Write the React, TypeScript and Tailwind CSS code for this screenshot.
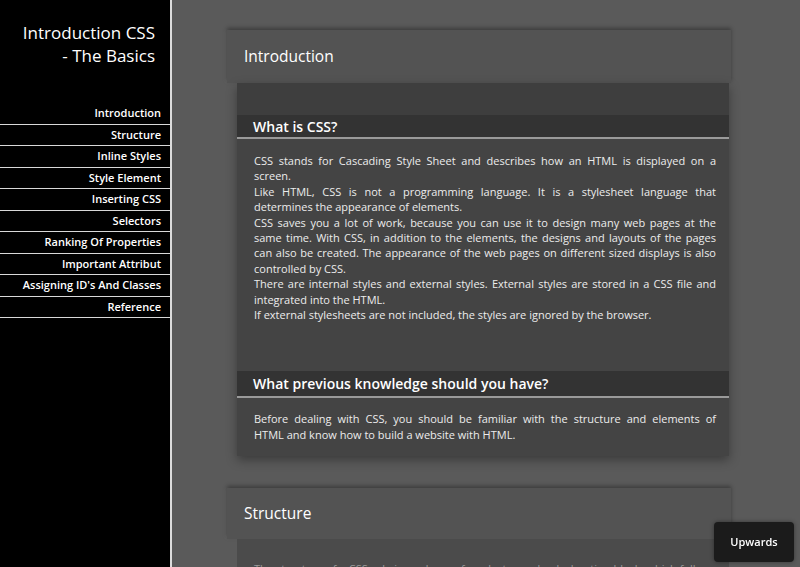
const navItems = [
  'Introduction',
  'Structure',
  'Inline Styles',
  'Style Element',
  'Inserting CSS',
  'Selectors',
  'Ranking Of Properties',
  'Important Attribut',
  "Assigning ID's And Classes",
  'Reference',
];

// [text, justified]
const whatIsCss: [string, boolean][] = [
  ['CSS stands for Cascading Style Sheet and describes how an HTML is displayed on a', true],
  ['screen.', false],
  ['Like HTML, CSS is not a programming language. It is a stylesheet language that', true],
  ['determines the appearance of elements.', false],
  ['CSS saves you a lot of work, because you can use it to design many web pages at the', true],
  ['same time. With CSS, in addition to the elements, the designs and layouts of the pages', true],
  ['can also be created. The appearance of the web pages on different sized displays is also', true],
  ['controlled by CSS.', false],
  ['There are internal styles and external styles. External styles are stored in a CSS file and', true],
  ['integrated into the HTML.', false],
  ['If external stylesheets are not included, the styles are ignored by the browser.', false],
];

const knowledge: [string, boolean][] = [
  ['Before dealing with CSS, you should be familiar with the structure and elements of', true],
  ['HTML and know how to build a website with HTML.', false],
];

const Sidebar = () => {
  return (
    <aside className="w-[172px] shrink-0 h-full bg-black border-r-2 border-[#dcdcdc]">
      <div className="h-[103px] pt-[21px] pr-[15px] text-right text-white text-[17px] leading-[23px]">
        Introduction CSS
        <br />- The Basics
      </div>
      <ul>
        {navItems.map((item) => (
          <li
            key={item}
            className="h-[21.5px] border-b border-[#d8d8d8] pr-[9px] flex items-center justify-end text-[11px] font-semibold text-white"
          >
            {item}
          </li>
        ))}
      </ul>
    </aside>
  );
};

const SubHeading = ({ title, size }: { title: string; size: string }) => (
  <div
    className={`bg-[#333333] border-b-2 border-[#9a9a9a] pl-[16px] flex items-center font-semibold text-white text-[14px] ${size}`}
  >
    {title}
  </div>
);

const Lines = ({ lines }: { lines: [string, boolean][] }) => (
  <>
    {lines.map(([text, justify]) => (
      <div
        key={text}
        className={justify ? 'whitespace-nowrap text-justify [text-align-last:justify]' : 'whitespace-nowrap'}
      >
        {text}
      </div>
    ))}
  </>
);

export default function App() {
  return (
    <div
      className="flex h-[567px] w-[800px] overflow-hidden bg-[#5a5a5a]"
      style={{ fontFamily: '"Open Sans", "Liberation Sans", sans-serif' }}
    >
      <Sidebar />
      <main className="flex-1 pt-[30px] pl-[55px]">
        <div className="w-[504px]">
          {/* Introduction */}
          <section>
            <div className="h-[53px] bg-[#535353] pl-[17px] flex items-center text-[15.5px] font-medium text-white shadow-[0_-2px_4px_rgba(0,0,0,0.35),-2px_0_3px_rgba(255,255,255,0.05)]">
              Introduction
            </div>
            <div className="ml-[10px] mr-[2px] bg-[#3e3e3e] shadow-[0_4px_10px_rgba(0,0,0,0.35)]">
              <div className="h-[32px]" />
              <SubHeading title="What is CSS?" size="h-[24px]" />
              <div className="bg-[#444444] pl-[17px] pr-[13px] pt-[14px] pb-[49px] text-[11px] leading-[15.4px] text-[#ececec]">
                <Lines lines={whatIsCss} />
              </div>
              <SubHeading title="What previous knowledge should you have?" size="h-[27px]" />
              <div className="bg-[#444444] pl-[17px] pr-[13px] pt-[13px] pb-[14px] text-[11px] leading-[15.4px] text-[#ececec]">
                <Lines lines={knowledge} />
              </div>
            </div>
          </section>

          {/* Structure */}
          <section className="mt-[32px]">
            <div className="h-[51px] bg-[#535353] pl-[17px] flex items-center text-[15.5px] font-medium text-white shadow-[0_-2px_4px_rgba(0,0,0,0.35),-2px_0_3px_rgba(255,255,255,0.05)]">
              Structure
            </div>
            <div className="ml-[10px] mr-[2px] bg-[#4b4b4b] pl-[17px] pr-[13px] pt-[22px] text-[11px] leading-[15.4px] text-justify text-[#9a9a9a]">
              The structure of a CSS rule is made up of a selector and a declaration block, which follows
              the selector and is enclosed in curly brackets.
            </div>
          </section>
        </div>
      </main>
      <button className="fixed right-[6px] bottom-[5px] w-[80px] h-[40px] rounded-[4px] bg-[#1b1b1b] text-white text-[11px] font-semibold shadow-[0_0_4px_rgba(0,0,0,0.4)]">
        Upwards
      </button>
    </div>
  );
}
